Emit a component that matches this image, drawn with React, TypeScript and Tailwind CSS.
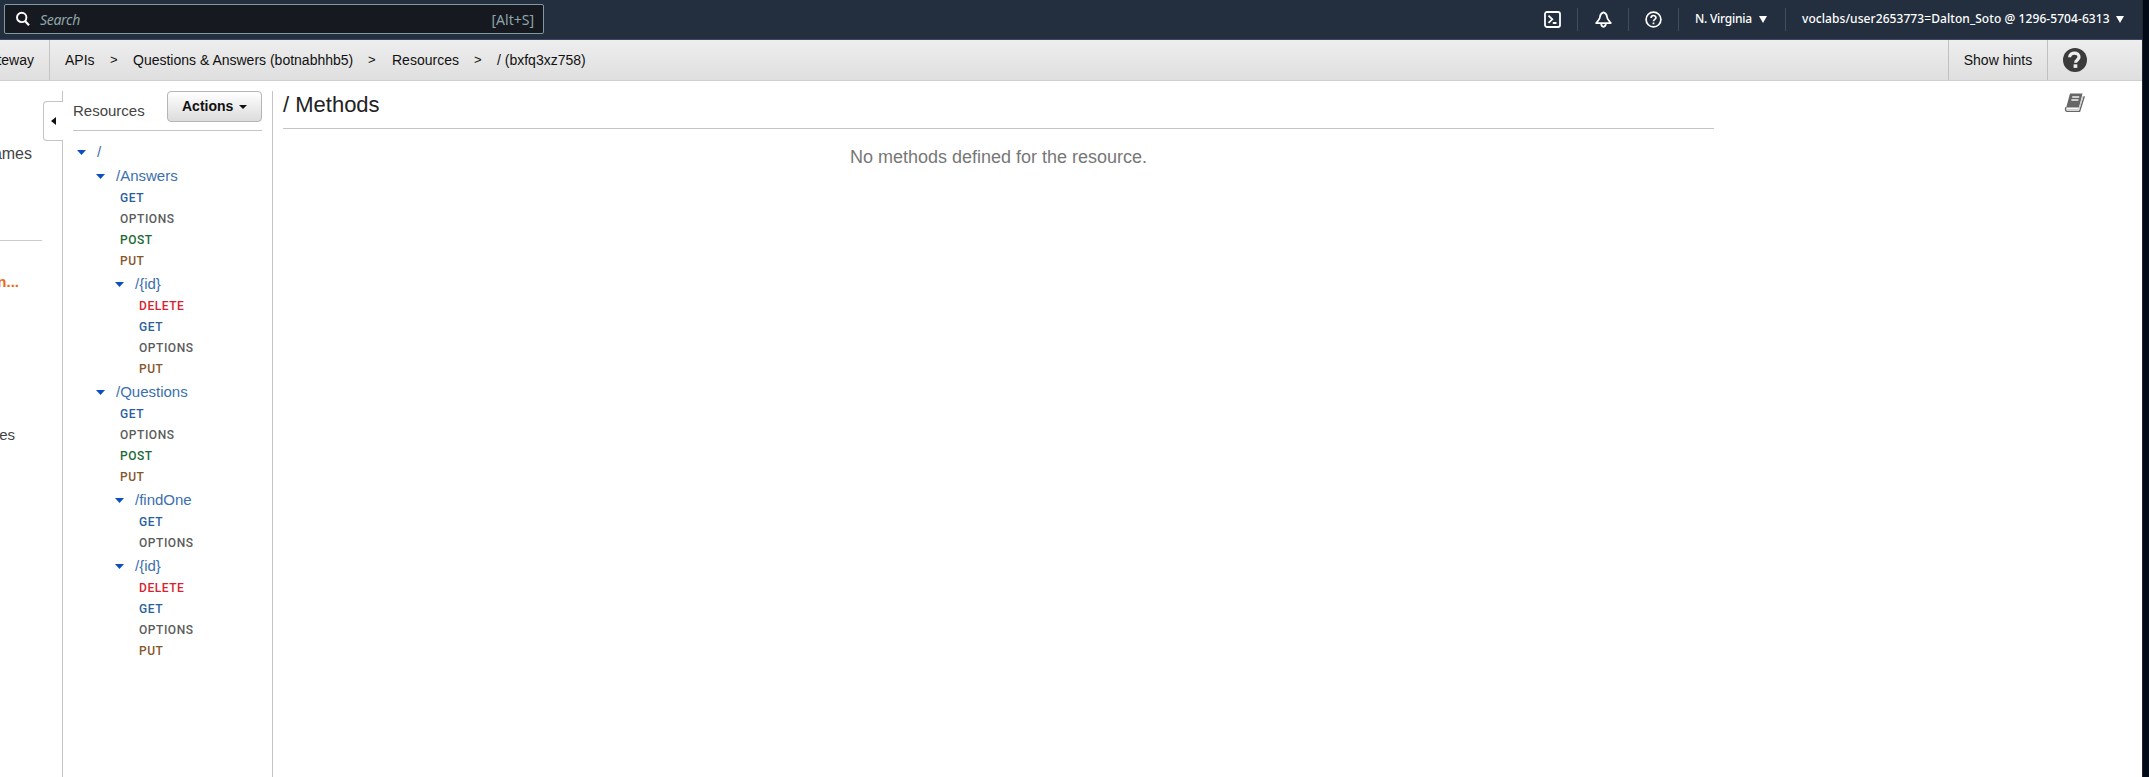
import React from "react";

type Method = "GET" | "OPTIONS" | "POST" | "PUT" | "DELETE";
type Row = { kind: "resource"; label: string; depth: 0 | 1 | 2 } | { kind: "method"; label: Method; depth: 1 | 2 };

const methodColor: Record<Method, string> = {
  GET: "text-[#2a5f9e]",
  OPTIONS: "text-[#5c5c5c]",
  POST: "text-[#1a6b35]",
  PUT: "text-[#85562b]",
  DELETE: "text-[#d8232f]",
};

const resourceIndent = ["pl-[4px]", "pl-[23px]", "pl-[42px]"];
const methodIndent = ["", "pl-[47px]", "pl-[66px]"];

const res = (label: string, depth: 0 | 1 | 2): Row => ({ kind: "resource", label, depth });
const methods = (depth: 1 | 2, ...labels: Method[]): Row[] => labels.map((label) => ({ kind: "method", label, depth }));

const rows: Row[] = [
  res("/", 0),
  res("/Answers", 1),
  ...methods(1, "GET", "OPTIONS", "POST", "PUT"),
  res("/{id}", 2),
  ...methods(2, "DELETE", "GET", "OPTIONS", "PUT"),
  res("/Questions", 1),
  ...methods(1, "GET", "OPTIONS", "POST", "PUT"),
  res("/findOne", 2),
  ...methods(2, "GET", "OPTIONS"),
  res("/{id}", 2),
  ...methods(2, "DELETE", "GET", "OPTIONS", "PUT"),
];

function Caret({ className, w, h }: { className: string; w: number; h: number }) {
  return (
    <svg width={w} height={h} viewBox="0 0 10 10" preserveAspectRatio="none" className={"shrink-0 " + className}>
      <path d="M0 0H10L5 10Z" fill="currentColor" />
    </svg>
  );
}

function Divider() {
  return <div className="h-[23px] w-px shrink-0 bg-[#414d5c]" />;
}

function TopBar() {
  return (
    <header className="flex h-[40px] shrink-0 items-start justify-between border-b border-[#3a4a66] bg-[#232f3e] font-['Noto_Sans','Open_Sans',sans-serif] text-white">
      <div className="ml-[4px] mt-[4px] flex h-[30px] w-[540px] items-center rounded-[2px] border border-[#7f9a9e] bg-[#161a20] text-[14px] text-[#8fa5a8]">
        <svg width="16" height="16" viewBox="0 0 16 16" className="ml-[10px] shrink-0 text-white">
          <circle cx="6.7" cy="6.4" r="4.7" fill="none" stroke="currentColor" strokeWidth="1.9" />
          <path d="M10 10L14 14.2" stroke="currentColor" strokeWidth="2.2" />
        </svg>
        <span className="ml-[9px] flex-1 italic tracking-[-0.3px]">Search</span>
        <span className="mr-[9px]">[Alt+S]</span>
      </div>
      <div className="flex h-[38px] items-center text-[12px] font-medium">
        <span className="flex w-[49px] justify-center">
          <svg width="17" height="17" viewBox="0 0 17 17" fill="none" stroke="currentColor" strokeWidth="1.8">
            <rect x="1" y="1" width="15" height="15" rx="2" />
            <path d="M4.5 4.7L8.3 8.3L4.5 11.9M8.8 12H12.5" />
          </svg>
        </span>
        <Divider />
        <span className="flex w-[50px] justify-center">
          <svg width="17" height="17" viewBox="0 0 17 17" fill="none" stroke="currentColor" strokeWidth="1.8">
            <path d="M8.5 1.4C6.2 2.2 5.2 3.6 5.1 5.5C5 8 3.6 9 1.2 12.1H15.8C13.4 9 12 8 11.9 5.5C11.8 3.6 10.8 2.2 8.5 1.4Z" strokeLinejoin="round" />
            <path d="M6.2 12.5C6.2 16.8 10.8 16.8 10.8 12.5" />
          </svg>
        </span>
        <Divider />
        <span className="flex w-[49px] justify-center">
          <svg width="17" height="17" viewBox="0 0 17 17" fill="none" stroke="currentColor" strokeWidth="1.7">
            <circle cx="8.5" cy="8.5" r="7.4" />
            <path d="M6.1 6.9C6.1 3.7 10.9 3.8 10.9 6.7C10.9 8.5 8.5 8.3 8.5 10.3M8.5 11.6V13.2" />
          </svg>
        </span>
        <Divider />
        <span className="flex w-[106px] items-center pl-[16px]">
          <span className="whitespace-nowrap tracking-[-0.25px]">N. Virginia</span>
          <Caret w={8} h={7} className="ml-[7px]" />
        </span>
        <Divider />
        <span className="flex w-[356px] items-center pl-[16px]">
          <span className="whitespace-nowrap tracking-[0.07px]">voclabs/user2653773=Dalton_Soto @ 1296-5704-6313</span>
          <Caret w={8} h={7} className="ml-[6px]" />
        </span>
      </div>
    </header>
  );
}

function Breadcrumbs() {
  return (
    <nav className="flex h-[41px] shrink-0 items-stretch border-b border-[#cfcfcf] bg-linear-to-b from-[#eeeeee] to-[#dfdfdf] text-[14px] text-[#111]">
      <div className="flex w-[50px] items-center justify-end overflow-hidden border-r border-[#c4c4c4] pr-[15px]">teway</div>
      <div className="flex flex-1 items-center whitespace-nowrap pl-[15px]">
        <span className="w-[45px]">APIs</span>
        <span className="w-[23px] text-[13px]">&gt;</span>
        <span className="w-[235px]">Questions &amp; Answers (botnabhhb5)</span>
        <span className="w-[24px] text-[13px]">&gt;</span>
        <span className="w-[82px]">Resources</span>
        <span className="w-[23px] text-[13px]">&gt;</span>
        <span>/ (bxfq3xz758)</span>
      </div>
      <div className="flex w-[99px] items-center justify-center border-l border-[#c0c0c0]">Show hints</div>
      <div className="flex w-[95px] items-center border-l border-[#c0c0c0] pl-[15px]">
        <svg width="24" height="24" viewBox="0 0 24 24">
          <circle cx="12" cy="12" r="12" fill="#3b3b3b" />
          <path d="M7.2 9.3C7.4 3.6 16.8 3.8 16.6 9.1C16.5 12 13.2 12 13.2 14.8" fill="none" stroke="#eee" strokeWidth="3.2" transform="translate(-0.6 0)" />
          <rect x="10.6" y="16.3" width="3.7" height="3.6" fill="#eee" />
        </svg>
      </div>
    </nav>
  );
}

function LeftNav() {
  return (
    <aside className="flex w-[43px] shrink-0 flex-col overflow-hidden text-[16px] leading-[20px] text-[#444]">
      <div className="mt-[63px] flex w-[32px] justify-end">ames</div>
      <div className="mt-[76px] h-px w-[42px] bg-[#ccc]" />
      <div className="mt-[31px] flex w-[19px] justify-end text-[15px] font-bold text-[#ec6a12]">n...</div>
      <div className="mt-[133px] flex w-[15px] justify-end text-[15px]">es</div>
    </aside>
  );
}

function CollapseHandle() {
  return (
    <div className="mt-[10px] flex w-[20px] shrink-0 flex-col items-end">
      <div className="h-[10px] w-px bg-[#c4c4c4]" />
      <div className="flex h-[40px] w-[20px] items-center rounded-l-[4px] border border-r-0 border-[#c4c4c4] pl-[7px]">
        <svg width="5" height="8" viewBox="0 0 5 8">
          <path d="M5 0V8L0 4Z" fill="#111" />
        </svg>
      </div>
      <div className="w-px flex-1 bg-[#c4c4c4]" />
    </div>
  );
}

function ResourceTree() {
  return (
    <section className="mt-[10px] flex w-[210px] shrink-0 flex-col border-r border-[#c4c4c4] pl-[10px] pr-[10px]">
      <div className="flex h-[40px] shrink-0 items-start justify-between border-b border-[#c4c4c4]">
        <span className="mt-[9px] text-[15px] leading-[22px] text-[#444]">Resources</span>
        <button className="flex h-[31px] w-[95px] items-center rounded-[4px] border border-[#b5b5b5] bg-linear-to-b from-white to-[#dcdcdc] pl-[14px] text-[14px] font-bold text-[#111]">
          Actions
          <Caret w={8} h={4} className="ml-[6px]" />
        </button>
      </div>
      <div className="mt-[9px] flex flex-col">
        {rows.map((r, i) =>
          r.kind === "resource" ? (
            <div key={i} className={"flex h-[24px] items-center text-[15px] text-[#3b6fae] " + resourceIndent[r.depth]}>
              <Caret w={9} h={5} className="text-[#0b4fc0]" />
              <span className="ml-[11px]">{r.label}</span>
            </div>
          ) : (
            <div key={i} className={"flex h-[21px] items-center pb-[2px] font-['Roboto','Liberation_Sans',sans-serif] text-[12px] font-medium tracking-[0.55px] " + methodIndent[r.depth] + " " + methodColor[r.label]}>
              {r.label}
            </div>
          ),
        )}
      </div>
    </section>
  );
}

function BookIcon() {
  return (
    <svg width="22" height="20" viewBox="0 0 22 20">
      <path d="M6 0.5H18.5L15 14.5H2.2Z" fill="#666" />
      <path d="M8.2 4H15.2M7.4 7H14.4" stroke="#f2f2f2" strokeWidth="1.5" />
      <path d="M2.2 14.2C0.8 16.2 1.6 18.4 3.4 18.4H15.6L20.3 3.2" fill="none" stroke="#666" strokeWidth="1.4" />
      <path d="M3 16.4H14.8L19 3" fill="none" stroke="#c9c9c9" strokeWidth="1" />
    </svg>
  );
}

export default function App() {
  return (
    <div className="flex h-[777px] w-[2149px] overflow-hidden bg-white font-['Liberation_Sans',Arial,sans-serif]">
      <div className="flex min-w-0 flex-1 flex-col">
        <TopBar />
        <Breadcrumbs />
        <div className="flex min-h-0 flex-1">
          <LeftNav />
          <CollapseHandle />
          <ResourceTree />
          <main className="ml-[10px] flex w-[1431px] shrink-0 flex-col">
            <h1 className="flex h-[48px] items-center border-b border-[#c4c4c4] text-[22px] leading-none text-[#222]">/ Methods</h1>
            <p className="mt-[15px] text-center text-[18px] leading-[26px] text-[#777]">No methods defined for the resource.</p>
          </main>
          <div className="ml-[350px] mt-[12px]">
            <BookIcon />
          </div>
        </div>
      </div>
      <div className="w-[7px] shrink-0 border-l border-[#20262e] bg-[#020a18]" />
    </div>
  );
}
